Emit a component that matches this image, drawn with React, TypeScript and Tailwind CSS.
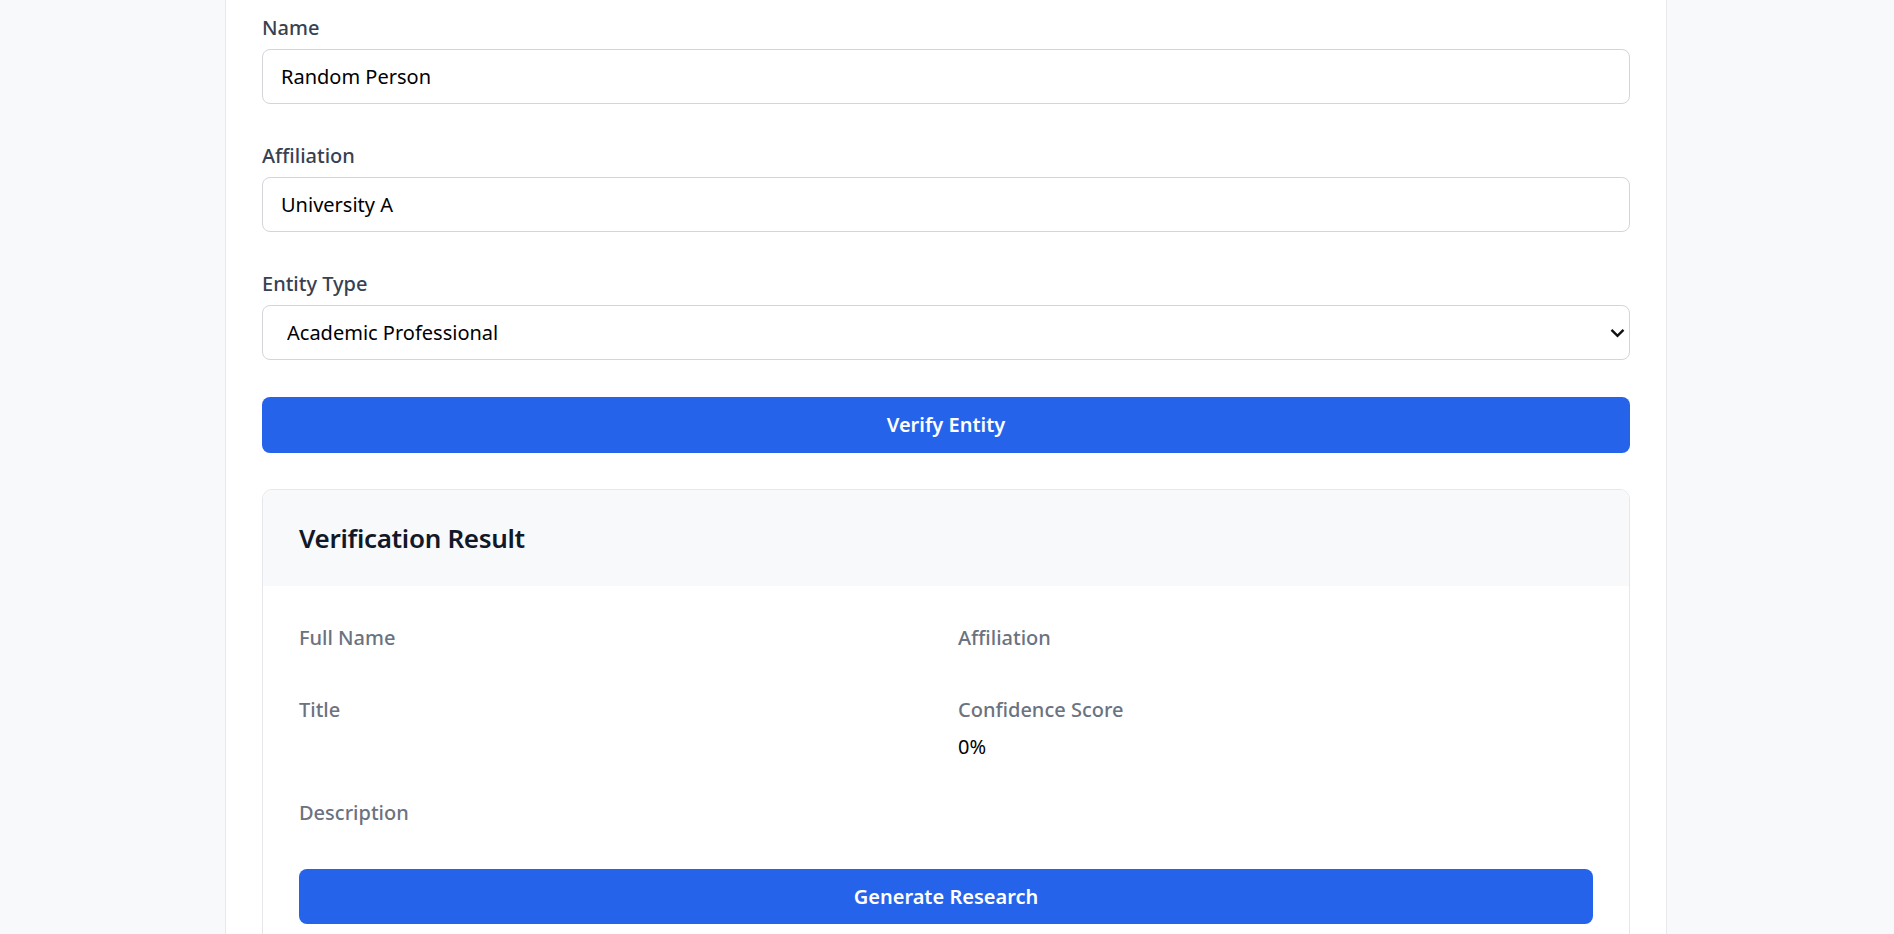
import { useState } from "react";

const ENTITY_TYPES = ["Academic Professional", "Company", "Organization"];

const inputClass =
  "w-full h-[55px] rounded-[8px] border border-[#d4d5db] bg-white pl-[18px] pr-4 text-[20px] text-black focus:outline-none";

const labelClass = "block text-[20px] leading-[30px] font-medium text-[#374151] mb-[6px]";

function ResultItem({ label, value, wide }: { label: string; value?: string; wide?: boolean }) {
  return (
    <div className={wide ? "col-span-2" : ""}>
      <div className="text-[20px] leading-[30px] font-medium text-[#6b7280] mb-[6px]">{label}</div>
      {value && <div className="text-[20px] leading-[31px] text-black">{value}</div>}
    </div>
  );
}

export default function App() {
  const [name, setName] = useState("Random Person");
  const [affiliation, setAffiliation] = useState("University A");
  const [entityType, setEntityType] = useState(ENTITY_TYPES[0]);

  return (
    <main
      className="min-h-screen bg-[#f8f9fb] flex justify-center"
      style={{ fontFamily: '"Segoe UI", "Noto Sans", sans-serif' }}
    >
      <div className="w-[1442px] -translate-x-px bg-white border-x border-[#e8e9ec] px-[36px] pt-[13px] pb-10">
        <form className="flex flex-col gap-[37px]" onSubmit={(e) => e.preventDefault()}>
          <div>
            <label className={labelClass}>Name</label>
            <input
              type="text"
              value={name}
              onChange={(e) => setName(e.target.value)}
              className={inputClass}
            />
          </div>

          <div>
            <label className={labelClass}>Affiliation</label>
            <input
              type="text"
              value={affiliation}
              onChange={(e) => setAffiliation(e.target.value)}
              className={inputClass}
            />
          </div>

          <div>
            <label className={labelClass}>Entity Type</label>
            <div className="relative">
              <select
                value={entityType}
                onChange={(e) => setEntityType(e.target.value)}
                className="w-full h-[55px] appearance-none rounded-[8px] border border-[#d4d5db] bg-white pl-[24px] pr-10 text-[20px] text-black focus:outline-none"
              >
                {ENTITY_TYPES.map((t) => (
                  <option key={t} value={t}>
                    {t}
                  </option>
                ))}
              </select>
              <svg
                className="pointer-events-none absolute right-[5px] top-1/2 -translate-y-1/2"
                width="15"
                height="10"
                viewBox="0 0 15 10"
                fill="none"
              >
                <path d="M1.5 1.8 L7.5 7.8 L13.5 1.8" stroke="#111" strokeWidth="2.4" />
              </svg>
            </div>
          </div>

          <button
            type="submit"
            className="h-[56px] w-full rounded-[8px] bg-[#2563eb] text-white text-[20px] font-semibold"
          >
            Verify Entity
          </button>
        </form>

        {/* Result card */}
        <div className="mt-[36px] rounded-[10px] border border-[#e5e7eb] overflow-hidden">
          <div className="h-[96px] bg-[#f8f9fb] px-[36px] py-[27px]">
            <h2 className="text-[26px] leading-[42px] font-semibold tracking-[-0.3px] text-[#111827]">
              Verification Result
            </h2>
          </div>
          <div className="px-[36px] pt-[37px] pb-[36px]">
            <div className="grid grid-cols-2 gap-x-[24px] gap-y-[36px]">
              <ResultItem label="Full Name" />
              <ResultItem label="Affiliation" />
              <ResultItem label="Title" />
              <ResultItem label="Confidence Score" value="0%" />
              <ResultItem label="Description" wide />
            </div>
            <button className="mt-[35px] h-[55px] w-full rounded-[8px] bg-[#2563eb] text-white text-[20px] font-semibold">
              Generate Research
            </button>
          </div>
        </div>
      </div>
    </main>
  );
}
